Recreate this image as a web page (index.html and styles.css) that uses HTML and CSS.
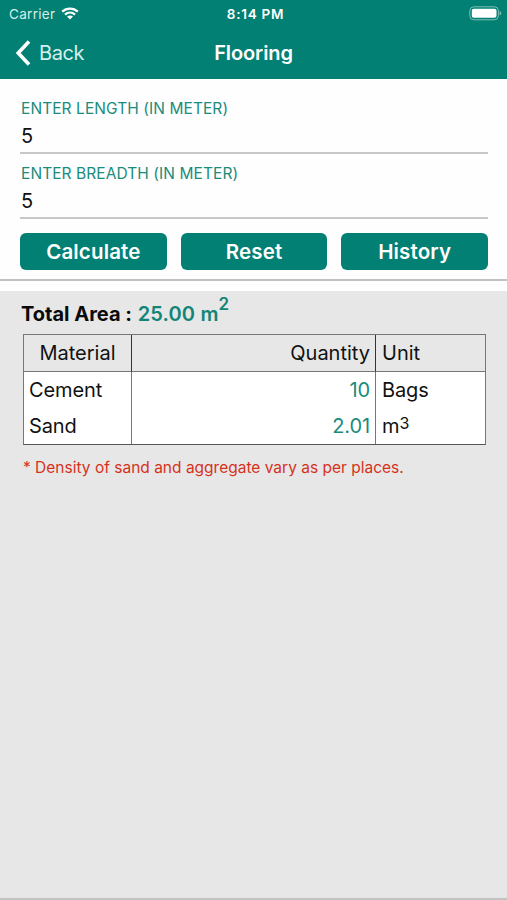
FILE: index.html
```html
<!DOCTYPE html>
<html lang="en">
<head>
  <meta charset="UTF-8" />
  <meta name="viewport" content="width=device-width, initial-scale=1.0" />
  <title>Flooring</title>
  <link rel="stylesheet" href="styles.css">
</head>
<body>

  <header class="header">
    <div class="status-bar">
      <div class="carrier">
        <span>Carrier</span>
        <svg class="wifi" viewBox="0 0 18 13" width="18" height="13">
          <path d="M1.2 4.7 C5.6 0.5 12.4 0.5 16.8 4.7" />
          <path d="M4 7.7 C6.9 5 11.1 5 14 7.7" />
          <path class="dot" d="M6 9.6 C7.8 8 10.2 8 12 9.6 L9 12.6 Z" />
        </svg>
      </div>
      <span class="time">8:14 PM</span>
      <svg class="battery" viewBox="0 0 33 15" width="33" height="15">
        <rect class="shell" x="0.8" y="0.8" width="28.6" height="13" rx="4" />
        <rect class="level" x="2.8" y="2.8" width="24.7" height="9" rx="2" />
        <path class="tip" d="M30.7 5 Q32.2 5.6 32.2 7.3 Q32.2 9 30.7 9.6 Z" />
      </svg>
    </div>
    <div class="nav-bar">
      <a class="back" href="#">
        <svg viewBox="0 0 16 26" width="16" height="26">
          <path d="M14 1.5 L3.2 13 L14 24.5" />
        </svg>
        <span>Back</span>
      </a>
      <h1>Flooring</h1>
    </div>
  </header>

  <form class="flooring-form">
    <div class="field">
      <label for="length">ENTER LENGTH (IN METER)</label>
      <input id="length" name="length" value="5" />
    </div>
    <div class="field">
      <label for="breadth">ENTER BREADTH (IN METER)</label>
      <input id="breadth" name="breadth" value="5" />
    </div>
    <div class="buttons">
      <button type="button">Calculate</button>
      <button type="button">Reset</button>
      <button type="button">History</button>
    </div>
  </form>

  <main class="results">
    <div class="total">Total Area : <span class="value">25.00 m<sup>2</sup></span></div>
    <table class="materials">
      <thead>
        <tr>
          <th class="material">Material</th>
          <th class="quantity">Quantity</th>
          <th class="unit">Unit</th>
        </tr>
      </thead>
      <tbody>
        <tr>
          <td>Cement</td>
          <td class="quantity">10</td>
          <td>Bags</td>
        </tr>
        <tr>
          <td>Sand</td>
          <td class="quantity">2.01</td>
          <td>m<sup>3</sup></td>
        </tr>
      </tbody>
    </table>
    <p class="note">* Density of sand and aggregate vary as per places.</p>
  </main>

</body>
</html>
```
FILE: styles.css
```css
* {
  box-sizing: border-box;
}

body {
  margin: 0;
  height: 900px;
  display: flex;
  flex-direction: column;
  font-family: Inter, "Liberation Sans", sans-serif;
  background: #fefefe;
  color: #111;
  overflow: hidden;
}

/* header */
.header {
  height: 79px;
  flex: none;
  background: #028073;
  color: white;
}

.status-bar {
  display: grid;
  grid-template-columns: 1fr auto 1fr;
  align-items: center;
  height: 27px;
  padding: 0 5px 0 9px;
  font-size: 13.5px;
}

.carrier {
  display: flex;
  align-items: center;
  gap: 6px;
  color: #d5eeea;
  letter-spacing: 0.3px;
}

.wifi {
  fill: none;
  stroke: white;
  stroke-width: 2.3;
}

.wifi .dot {
  fill: white;
  stroke: none;
}

.time {
  font-weight: 600;
  font-size: 13.5px;
  letter-spacing: 0.75px;
}

.battery {
  justify-self: end;
}

.battery .shell {
  fill: none;
  stroke: #80bfb8;
  stroke-width: 1;
}

.battery .level {
  fill: white;
}

.battery .tip {
  fill: #80bfb8;
}

.nav-bar {
  display: grid;
  grid-template-columns: 1fr auto 1fr;
  align-items: center;
  height: 51px;
  padding: 0 15px;
}

.back {
  display: flex;
  align-items: center;
  gap: 8px;
  color: #d5f0ec;
  font-size: 20px;
  letter-spacing: -0.4px;
  text-decoration: none;
}

.back path {
  fill: none;
  stroke: white;
  stroke-width: 3.6;
}

.nav-bar h1 {
  margin: 0;
  font-size: 20px;
  font-weight: 600;
  letter-spacing: -0.1px;
}

/* form */
.flooring-form {
  flex: none;
  height: 202px;
  padding: 17px 19px 0 20px;
  border-bottom: 2px solid #c2c2c2;
}

.field {
  height: 65px;
}

.field label {
  display: block;
  height: 26px;
  padding-left: 1px;
  line-height: 25px;
  font-size: 15.5px;
  letter-spacing: 0.07px;
  color: #1b8b7c;
}

.field input {
  display: block;
  width: 100%;
  height: 32px;
  padding: 0 1px 2px;
  border: none;
  border-bottom: 2px solid #c8c8c8;
  background: none;
  font-family: inherit;
  font-size: 20px;
  color: #111;
  outline: none;
}

.buttons {
  display: flex;
  gap: 14px;
  padding-top: 7px;
}

.buttons button {
  flex: 1;
  height: 37px;
  padding: 0;
  border: none;
  border-radius: 6px;
  background: #028073;
  color: white;
  font-family: inherit;
  font-size: 20.5px;
  font-weight: 600;
  letter-spacing: 0.15px;
}

/* results */
.results {
  flex: 1;
  margin-top: 10px;
  padding: 0 21px;
  background: #e7e7e7;
  border-bottom: 2px solid #c2c2c2;
}

.total {
  height: 43px;
  line-height: 46px;
  font-size: 20px;
  font-weight: 700;
  color: #0a0a0a;
}

.total .value {
  margin-left: 1px;
  font-weight: 600;
  letter-spacing: 0.15px;
  color: #128576;
}

.total sup {
  position: relative;
  top: -11px;
  font-size: 17px;
  line-height: 0;
  vertical-align: baseline;
}

.materials {
  width: 463px;
  margin-left: 2px;
  table-layout: fixed;
  border-collapse: separate;
  border-spacing: 0;
  border: 1px solid #777;
  border-bottom-color: #555;
  font-size: 20px;
}

.materials th,
.materials td {
  height: 36px;
  padding: 0 5px;
  font-weight: 400;
  line-height: 30px;
  text-align: left;
  border-right: 1px solid #777;
}

.materials th {
  height: 37px;
  border-color: #333;
  border-bottom: 1px solid #777;
}

.materials th:last-child,
.materials td:last-child {
  padding-left: 6px;
  border-right: none;
}

.materials th.material {
  width: 108px;
  text-align: center;
}

.materials th.unit {
  width: 109px;
}

.materials .quantity {
  text-align: right;
}

.materials td {
  background: white;
  letter-spacing: -0.1px;
}

.materials td.quantity {
  color: #1b8b7c;
}

.materials td sup {
  position: relative;
  top: -4px;
  font-size: 16px;
  line-height: 0;
  vertical-align: baseline;
}

.note {
  margin: 12px 0 0 2px;
  line-height: 22px;
  font-size: 15.5px;
  color: #d5321c;
}
```
